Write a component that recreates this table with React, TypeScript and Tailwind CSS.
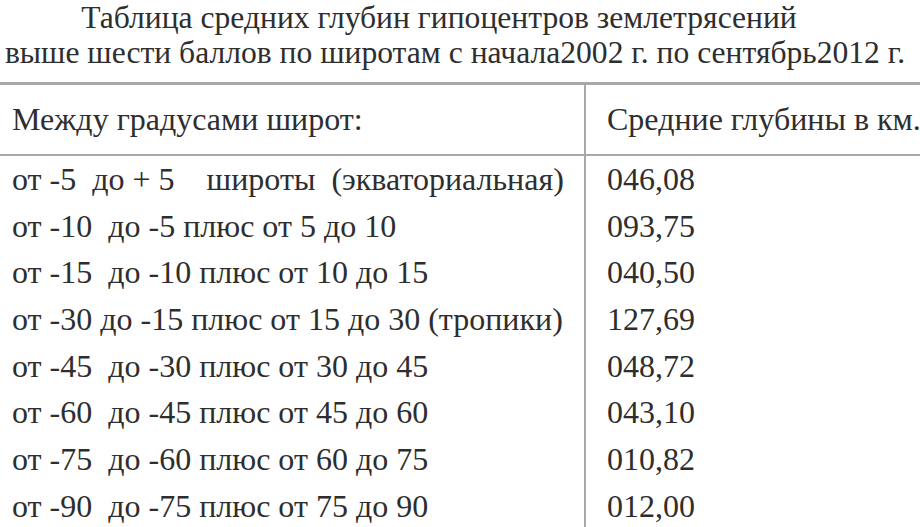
import React from "react";

const rows: [string, string][] = [
  ["от -5  до + 5    широты  (экваториальная)", "046,08"],
  ["от -10  до -5 плюс от 5 до 10", "093,75"],
  ["от -15  до -10 плюс от 10 до 15", "040,50"],
  ["от -30 до -15 плюс от 15 до 30 (тропики)", "127,69"],
  ["от -45  до -30 плюс от 30 до 45", "048,72"],
  ["от -60  до -45 плюс от 45 до 60", "043,10"],
  ["от -75  до -60 плюс от 60 до 75", "010,82"],
  ["от -90  до -75 плюс от 75 до 90", "012,00"],
];

export default function App() {
  return (
    <div className="w-[920px] h-[527px] overflow-hidden bg-white text-[#2e2e2e] font-['Liberation_Serif']">
      <div className="text-center text-[31.6px] leading-[35px] whitespace-pre pr-[10px] -mb-[2px]">
        <div className="pr-[32px]">Таблица средних глубин гипоцентров землетрясений</div>
        <div>выше шести баллов по широтам с начала2002 г. по сентябрь2012 г.</div>
      </div>
      <div className="mt-[14px] h-[3px] bg-[#a8a8a8]" />
      <div className="grid grid-cols-[584px_1fr]">
        <div className="pl-[12px] text-[32px] leading-[69px] whitespace-pre">Между градусами широт:</div>
        <div className="border-l-2 border-[#a8a8a8] pl-[21px] text-[32px] leading-[69px] whitespace-pre">
          Средние глубины в км.
        </div>
      </div>
      <div className="h-[2px] bg-[#a8a8a8]" />
      <div className="grid grid-cols-[584px_1fr]">
        <div className="pl-[12px] text-[32px] leading-[46.67px] whitespace-pre">
          {rows.map((r, i) => (
            <div key={i}>{r[0]}</div>
          ))}
        </div>
        <div className="border-l-2 border-[#a8a8a8] pl-[21px] text-[32px] leading-[46.67px] whitespace-pre">
          {rows.map((r, i) => (
            <div key={i}>{r[1]}</div>
          ))}
        </div>
      </div>
    </div>
  );
}
